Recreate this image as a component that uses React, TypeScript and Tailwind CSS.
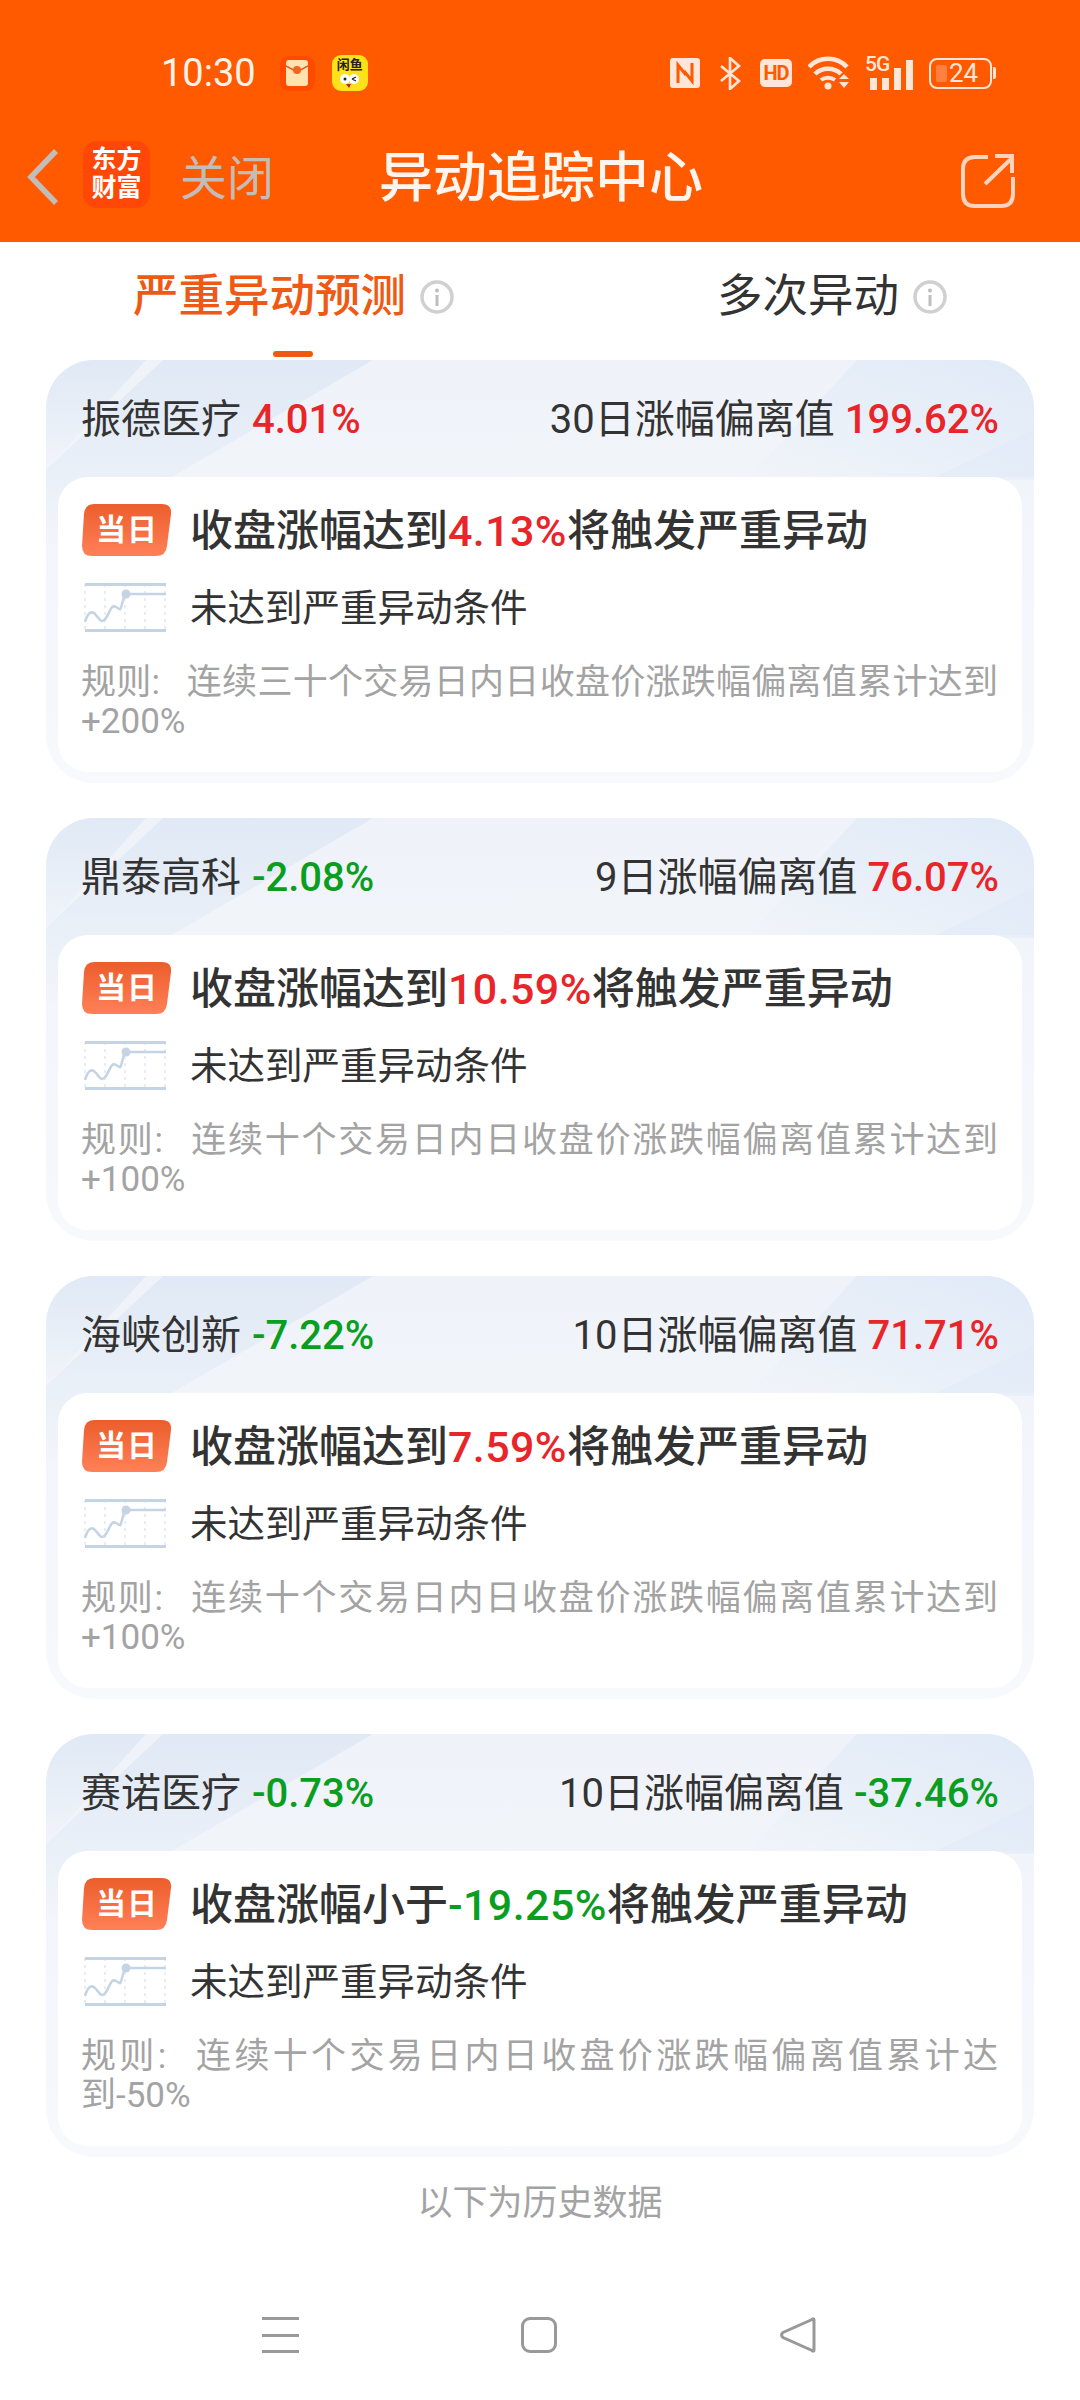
const cards = [
  {
    name: "振德医疗",
    change: "4.01%",
    changeUp: true,
    label: "30日涨幅偏离值",
    dev: "199.62%",
    devUp: true,
    lead: "收盘涨幅达到",
    target: "4.13%",
    targetUp: true,
    rule: "连续三十个交易日内日收盘价涨跌幅偏离值累计达到+200%",
  },
  {
    name: "鼎泰高科",
    change: "-2.08%",
    changeUp: false,
    label: "9日涨幅偏离值",
    dev: "76.07%",
    devUp: true,
    lead: "收盘涨幅达到",
    target: "10.59%",
    targetUp: true,
    rule: "连续十个交易日内日收盘价涨跌幅偏离值累计达到+100%",
  },
  {
    name: "海峡创新",
    change: "-7.22%",
    changeUp: false,
    label: "10日涨幅偏离值",
    dev: "71.71%",
    devUp: true,
    lead: "收盘涨幅达到",
    target: "7.59%",
    targetUp: true,
    rule: "连续十个交易日内日收盘价涨跌幅偏离值累计达到+100%",
  },
  {
    name: "赛诺医疗",
    change: "-0.73%",
    changeUp: false,
    label: "10日涨幅偏离值",
    dev: "-37.46%",
    devUp: false,
    lead: "收盘涨幅小于",
    target: "-19.25%",
    targetUp: false,
    rule: "连续十个交易日内日收盘价涨跌幅偏离值累计达到-50%",
  },
];

function StatusIcons() {
  return (
    <div className="ml-auto flex items-center text-[#ffe6d8]">
      {/* nfc */}
      <svg width="30" height="30" viewBox="0 0 30 30" className="mr-[19px]">
        <rect width="30" height="30" rx="3" fill="#ffe6d8" />
        <path d="M8 25V7l8 10M22 5v18l-8-10" fill="none" stroke="#ff5a00" strokeWidth="3" />
      </svg>
      {/* bluetooth */}
      <svg width="22" height="33" viewBox="0 0 22 33" className="mr-[19px]">
        <path d="M2 9l18 15-9 8V1l9 8L2 24" fill="none" stroke="#ffe6d8" strokeWidth="2.6" />
      </svg>
      <div className="mr-[16px] flex h-[28px] w-[32px] items-center justify-center rounded-[5px] bg-[#ffe6d8] text-[20px] leading-none font-bold tracking-[-1px] text-[#ff5a00]">
        HD
      </div>
      {/* wifi */}
      <svg width="42" height="34" viewBox="0 0 42 34" className="mr-[15px]">
        <path d="M1 11c10-11 28-11 38 0" fill="none" stroke="#ffe6d8" strokeWidth="4.5" />
        <path d="M7 18c7-7 19-7 26 0" fill="none" stroke="#ffe6d8" strokeWidth="4.5" />
        <path d="M13 24c4-3 10-3 14 0" fill="none" stroke="#ffe6d8" strokeWidth="4" />
        <circle cx="20" cy="30" r="3.5" fill="#ffe6d8" />
        <path d="M31 23l5-5 5 5zM31 26l5 6 5-6z" fill="#ffe6d8" />
      </svg>
      {/* 5G + signal */}
      <div className="relative mr-[16px] h-[34px] w-[48px]">
        <span className="absolute top-[-2px] left-0 text-[21px] leading-[20px] font-medium tracking-[-1px]">5G</span>
        <div className="absolute right-0 bottom-0 flex items-end gap-[5px]">
          <div className="h-[12px] w-[7px] bg-[#ffe6d8]" />
          <div className="h-[12px] w-[7px] bg-[#ffe6d8]" />
          <div className="h-[22px] w-[7px] bg-[#ffe6d8]" />
          <div className="h-[30px] w-[7px] bg-[#ffe6d8]" />
        </div>
      </div>
      {/* battery */}
      <div className="relative flex h-[31px] w-[63px] items-center justify-center rounded-[8px] border-2 border-[#ffe6d8] pl-[6px]">
        <div className="absolute top-[5px] bottom-[5px] left-[5px] w-[11px] rounded-[2px] bg-[#ff8040]" />
        <span className="relative text-[26px] leading-none">24</span>
      </div>
      <div className="ml-[1px] h-[12px] w-[3px] rounded-r-[2px] bg-[#ffe6d8]" />
    </div>
  );
}

function ChartIcon() {
  return (
    <svg width="82" height="52" viewBox="0 0 82 52" className="shrink-0">
      <g stroke="#dfe7f0" strokeWidth="1.5" strokeDasharray="3 4">
        <path d="M1 2v46M21 2v46M41 2v46M61 2v46M81 2v46" />
      </g>
      <path d="M1 2.5h81M1 48.5h81" stroke="#c5d4e4" strokeWidth="3" />
      <path
        d="M1 40C4 30 8 28 12 33s6 9 10 3 5-14 10-11 4 4 6-3 2-10 4-10h40"
        fill="none"
        stroke="#c5d4e4"
        strokeWidth="2.5"
      />
      <circle cx="42" cy="12" r="4.5" fill="#c5d4e4" />
    </svg>
  );
}

function InfoIcon() {
  return (
    <svg width="34" height="34" viewBox="0 0 34 34">
      <circle cx="17" cy="17" r="15" fill="none" stroke="#d0d0d0" strokeWidth="3.5" />
      <circle cx="17" cy="10.5" r="2" fill="#bdbdbd" />
      <path d="M17 15v11" stroke="#bdbdbd" strokeWidth="3" />
    </svg>
  );
}

function Pct({ up, children }: { up: boolean; children: string }) {
  return <span className={`font-medium ${up ? "text-[#e8262a]" : "text-[#0a9e1f]"}`}>{children}</span>;
}

function CardBg() {
  return (
    <svg className="absolute inset-0" width="988" height="423" viewBox="0 0 988 423">
      <defs>
        <linearGradient id="fadeL" x1="0" y1="0" x2="0" y2="1">
          <stop offset="0" stopColor="#e0e9f5" />
          <stop offset="1" stopColor="#e0e9f5" stopOpacity="0" />
        </linearGradient>
        <linearGradient id="fadeR" x1="1" y1="0" x2="0" y2="1">
          <stop offset="0" stopColor="#e0eaf7" />
          <stop offset="1" stopColor="#e0eaf7" stopOpacity="0" />
        </linearGradient>
      </defs>
      <path d="M117 0H327L0 190V110z" fill="url(#fadeL)" />
      <path d="M0 0H100L0 110z" fill="url(#fadeL)" />
      <path d="M811 0H988V120H700z" fill="url(#fadeR)" />
      <path d="M988 70V117H890z" fill="#e0eaf7" opacity="0.5" />
    </svg>
  );
}

function AlertCard({ c }: { c: (typeof cards)[number] }) {
  return (
    <div className="relative flex h-[423px] w-[988px] flex-col overflow-hidden rounded-[48px] bg-gradient-to-b from-[#eff3f9] to-[#f7f9fc] px-[12px] pb-[11px]">
      <CardBg />
      <div className="relative flex h-[119px] items-center justify-between pr-[23px] pl-[23px] text-[40px] leading-none text-[#333]">
        <div>
          {c.name} <span className="ml-[1px]" /><Pct up={c.changeUp}>{c.change}</Pct>
        </div>
        <div>
          {c.label} <Pct up={c.devUp}>{c.dev}</Pct>
        </div>
      </div>
      <div className="relative -mt-[2px] flex-1 rounded-[30px] bg-white pt-[27px] pr-[24px] pl-[23px]">
        <div className="flex h-[52px] items-center">
          <div className="relative ml-[1px] flex h-[52px] w-[90px] shrink-0 items-center justify-center">
            <svg className="absolute inset-0" width="90" height="52" viewBox="0 0 90 52">
              <defs>
                <linearGradient id="badge" x1="0" y1="0" x2="0" y2="1">
                  <stop offset="0" stopColor="#ec5d2c" />
                  <stop offset="1" stopColor="#ff8057" />
                </linearGradient>
              </defs>
              <path
                d="M12 0H80Q90 0 89 10L85 42Q84 52 74 52H10Q0 52 0 42L2 10Q3 0 12 0z"
                fill="url(#badge)"
              />
            </svg>
            <span className="relative text-[30px] leading-none font-bold tracking-[1px] text-white">当日</span>
          </div>
          <div className="mt-[2px] ml-[18px] text-[43px] leading-none font-medium whitespace-nowrap text-[#333]">
            {c.lead}
            <span className="tracking-[0.4px]">
              <Pct up={c.targetUp}>{c.target}</Pct>
            </span>
            将触发严重异动
          </div>
        </div>
        <div className="mt-[26px] flex h-[52px] items-center pl-[3px]">
          <ChartIcon />
          <div className="mt-[2px] ml-[24px] text-[37.5px] leading-none text-[#333]">未达到严重异动条件</div>
        </div>
        <p className="mt-[29px] text-justify text-[35px] leading-[39px] text-[#a3a3a3]">
          规则<span className="inline-block w-[35px]">:</span>
          {c.rule}
        </p>
      </div>
    </div>
  );
}

export default function App() {
  return (
    <div className="flex h-[2400px] w-[1080px] flex-col overflow-hidden bg-white font-['Roboto','Noto_Sans_CJK_SC',sans-serif]">
      <header className="flex h-[242px] shrink-0 flex-col bg-[#ff5a00]">
        {/* status bar */}
        <div className="flex h-[120px] items-center pt-[26px] pr-[84px] pl-[161px]">
          <span className="text-[38px] leading-none text-[#fff3ea]">10:30</span>
          <div className="ml-[24px] flex h-[35px] w-[35px] items-center justify-center rounded-[9px] bg-[#ff4a00]">
            <svg width="22" height="26" viewBox="0 0 22 26">
              <rect width="22" height="26" rx="3" fill="#ffe2b0" />
              <path d="M0 6l11 6 11-6" fill="none" stroke="#e8521c" strokeWidth="1.5" />
              <circle cx="11" cy="10" r="4" fill="#f0641e" />
            </svg>
          </div>
          <div className="relative ml-[17px] flex h-[36px] w-[36px] flex-col items-center overflow-hidden rounded-[9px] bg-[#ffe11a]">
            <span className="mt-[3px] text-[13px] leading-none font-bold text-[#222]">闲鱼</span>
            <svg width="26" height="18" viewBox="0 0 26 18">
              <circle cx="8" cy="8" r="5" fill="#fff" />
              <circle cx="17" cy="8" r="5" fill="#fff" />
              <circle cx="8" cy="8" r="1.5" fill="#222" />
              <path d="M15 8l4-2M15 8l4 2" stroke="#222" strokeWidth="1.2" />
              <path d="M9 13h5l-2 4z" fill="#c0261c" />
            </svg>
          </div>
          <StatusIcons />
        </div>
        {/* nav bar */}
        <div className="relative flex h-[114px] items-center">
          <svg width="34" height="58" viewBox="0 0 34 58" className="ml-[26px]">
            <path d="M30 3L5 29l25 26" fill="none" stroke="#c2bdb8" strokeWidth="5.5" />
          </svg>
          <div className="mb-[6px] ml-[23px] flex h-[67px] w-[67px] flex-col items-center justify-center rounded-[14px] bg-[#ff4808] text-[25px] leading-[28px] font-bold text-white">
            <span>东方</span>
            <span>财富</span>
          </div>
          <span className="mt-[3px] ml-[30px] text-[47px] leading-none text-[#c4bcb6]">关闭</span>
          <span className="absolute top-[32px] left-[379px] text-[54px] leading-none font-medium text-[#fff5ef]">
            异动追踪中心
          </span>
          <svg width="56" height="56" viewBox="0 0 56 56" className="mt-[8px] mr-[64px] ml-auto">
            <path
              d="M28 4H15Q3 4 3 16V41Q3 53 15 53H41Q53 53 53 41V24"
              fill="none"
              stroke="#ffd3bd"
              strokeWidth="4"
            />
            <path d="M25 31L52 5M35 3H52V20" fill="none" stroke="#ffd3bd" strokeWidth="4" />
          </svg>
        </div>
      </header>

      {/* tabs */}
      <div className="flex h-[118px] shrink-0 items-start pt-[32px] pl-[133px] text-[45.5px] leading-[46px]">
        <div className="relative flex items-center gap-[14px] font-medium text-[#ee5a14]">
          严重异动预测
          <InfoIcon />
          <div className="absolute top-[77px] left-[140px] h-[6px] w-[40px] rounded-full bg-[#ee5a14]" />
        </div>
        <div className="ml-[263px] flex items-center gap-[14px] text-[#333]">
          多次异动
          <InfoIcon />
        </div>
      </div>

      <div className="flex flex-col gap-[35px] pl-[46px]">
        {cards.map((c) => (
          <AlertCard key={c.name} c={c} />
        ))}
      </div>

      <div className="mt-[27px] text-center text-[35px] leading-[40px] text-[#a3a3a3]">以下为历史数据</div>

      {/* system nav */}
      <div className="mt-[93px] flex h-[36px] items-center pl-[262px]">
        <div className="flex h-[36px] w-[37px] flex-col justify-between">
          <div className="h-[3px] bg-[#999]" />
          <div className="h-[3px] bg-[#999]" />
          <div className="h-[3px] bg-[#999]" />
        </div>
        <div className="ml-[222px] h-[36px] w-[36px] rounded-[9px] border-[3px] border-[#999]" />
        <svg width="36" height="36" viewBox="0 0 36 36" className="ml-[223px]">
          <path d="M34 3Q34 1 32 2.500L3 15.500Q0 18 3 20.500L32 33.500Q34 35 34 33z" fill="none" stroke="#999" strokeWidth="3" />
        </svg>
      </div>
    </div>
  );
}
